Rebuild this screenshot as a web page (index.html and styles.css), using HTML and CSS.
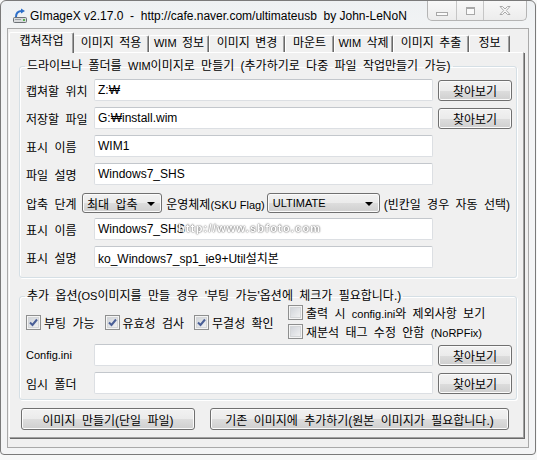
FILE: index.html
```html
<!DOCTYPE html>
<html lang="ko">
<head>
  <meta charset="UTF-8">
  <title>GImageX</title>
  <link rel="stylesheet" href="styles.css">
</head>
<body>

  <div class="window">
    <div class="titlebar">
      <svg class="app-icon" width="16" height="16" viewBox="0 0 16 16">
        <rect x="1.5" y="9.5" width="13" height="5" rx="1" fill="#d8dadc" stroke="#6d7277"/>
        <rect x="3" y="11" width="6" height="1" fill="#9aa0a6"/>
        <rect x="11" y="11" width="2" height="2" fill="#55b04c"/>
        <path d="M4 9 C4 5 6 3 10 3" fill="none" stroke="#2d6fc9" stroke-width="2"/>
        <path d="M9 0.5 L13 3 L9 5.5 Z" fill="#2d6fc9"/>
      </svg>
      <span class="title">GImageX v2.17.0  -  http://cafe.naver.com/ultimateusb  by John-LeNoN</span>
      <div class="caption">
        <span class="cap cap-min"><i></i></span>
        <span class="cap cap-max"><i></i></span>
        <span class="cap cap-close">
          <svg width="12" height="11" viewBox="0 0 12 11">
            <path d="M1 1.5 H3.5 L6 4 L8.5 1.5 H11 L7.3 5.5 L11 9.5 H8.5 L6 7 L3.5 9.5 H1 L4.7 5.5 Z" fill="#fafafa" stroke="#a8a8a8"/>
          </svg>
        </span>
      </div>
    </div>

    <div class="client">
      <div class="tabstrip">
        <span class="tab active">캡쳐작업</span>
        <span class="tab">이미지 적용</span>
        <span class="tab"><span class="en">WIM</span> 정보</span>
        <span class="tab">이미지 변경</span>
        <span class="tab">마운트</span>
        <span class="tab"><span class="en">WIM</span> 삭제</span>
        <span class="tab">이미지 추출</span>
        <span class="tab">정보</span>
      </div>

      <div class="panel">
        <fieldset class="group group-capture">
          <legend>드라이브나 폴더를 <span class="en">WIM</span>이미지로 만들기 (추가하기로 다중 파일 작업만들기 가능)</legend>

          <div class="row">
            <label>캡쳐할 위치</label>
            <div class="field">Z:₩</div>
            <button class="btn btn-browse">찾아보기</button>
          </div>
          <div class="row">
            <label>저장할 파일</label>
            <div class="field">G:₩install.wim</div>
            <button class="btn btn-browse">찾아보기</button>
          </div>
          <div class="row">
            <label>표시 이름</label>
            <div class="field">WIM1</div>
          </div>
          <div class="row">
            <label>파일 설명</label>
            <div class="field">Windows7_SHS</div>
          </div>
          <div class="row row-combo">
            <label class="label-short">압축 단계</label>
            <div class="combo combo-level"><span>최대 압축</span><b class="arrow"></b></div>
            <span class="combo-caption">운영체제<span class="en">(SKU Flag)</span></span>
            <div class="combo combo-sku"><span class="en">ULTIMATE</span><b class="arrow"></b></div>
            <span class="combo-caption">(빈칸일 경우 자동 선택)</span>
          </div>
          <div class="row">
            <label>표시 이름</label>
            <div class="field">Windows7_SHS</div>
            <span class="watermark">http://www.sbfoto.com</span>
          </div>
          <div class="row">
            <label>표시 설명</label>
            <div class="field">ko_Windows7_sp1_ie9+Util설치본</div>
          </div>
        </fieldset>

        <fieldset class="group group-options">
          <legend>추가 옵션(<span class="en">OS</span>이미지를 만들 경우 '부팅 가능'옵션에 체크가 필요합니다.)</legend>

          <div class="options">
            <div class="options-main">
              <span class="check checked"><span>부팅 가능</span></span>
              <span class="check checked"><span>유효성 검사</span></span>
              <span class="check checked"><span>무결성 확인</span></span>
            </div>
            <div class="options-side">
              <span class="check"><span>출력 시 <span class="en">config.ini</span>와 제외사항 보기</span></span>
              <span class="check"><span>재분석 태그 수정 안함 <span class="en">(NoRPFix)</span></span></span>
            </div>
          </div>

          <div class="row">
            <label class="en">Config.ini</label>
            <div class="field"></div>
            <button class="btn btn-browse">찾아보기</button>
          </div>
          <div class="row">
            <label>임시 폴더</label>
            <div class="field"></div>
            <button class="btn btn-browse">찾아보기</button>
          </div>
        </fieldset>

        <div class="actions">
          <button class="btn btn-single">이미지 만들기(단일 파일)</button>
          <button class="btn btn-append">기존 이미지에 추가하기(원본 이미지가 필요합니다.)</button>
        </div>
      </div>
    </div>
  </div>

</body>
</html>
```

FILE: styles.css
```css
* {
  box-sizing: border-box;
}

body {
  margin: 0;
  background: #f7f8f8;
  font-family: "Liberation Sans", "Noto Sans CJK KR", sans-serif;
  font-size: 12px;
  color: #000;
}

.en {
  font-size: 11px;
  word-spacing: 0;
}

/* window frame */
.window {
  width: 536px;
  height: 455px;
  border: 1px solid #7a7a7a;
  border-radius: 6px 6px 4px 4px;
  background: linear-gradient(#eef1f3, #f3f4f5 40px);
  padding: 0 6px 6px;
}

.titlebar {
  display: flex;
  align-items: center;
  height: 27px;
}

.app-icon {
  margin: 2px 2px 0 5px;
  flex: none;
}

.title {
  white-space: pre;
  margin-top: 2px;
}

.caption {
  display: flex;
  align-self: flex-start;
  margin-left: auto;
  margin-right: 2px;
  height: 20px;
  border: 1px solid #b4b4b4;
  border-top: none;
  border-radius: 0 0 5px 5px;
  background: linear-gradient(#f8f8f8, #ececec);
}

.cap {
  display: flex;
  align-items: center;
  justify-content: center;
  height: 100%;
  border-left: 1px solid #c6c6c6;
}

.cap:first-child {
  border-left: none;
}

.cap-min {
  width: 28px;
}

.cap-min i {
  width: 12px;
  height: 4px;
  margin-top: 6px;
  border: 1px solid #a8a8a8;
  background: #fafafa;
}

.cap-max {
  width: 27px;
}

.cap-max i {
  width: 9px;
  height: 8px;
  border: 1px solid #a8a8a8;
  border-top-width: 2px;
  background: #fafafa;
}

.cap-close {
  width: 43px;
}

/* client area */
.client {
  height: 420px;
  border: 1px solid #a9a9a9;
  background: #f0f0f0;
  padding: 3px 3px 0 1px;
  word-spacing: 3px;
}

.tabstrip {
  display: flex;
  align-items: flex-end;
  height: 20px;
}

.tab {
  display: block;
  flex: none;
  height: 17px;
  line-height: 15px;
  text-align: center;
  border-top: 1px solid #fff;
  border-left: 1px solid #fff;
  border-right: 1px solid #696969;
  box-shadow: inset -1px 0 0 #a0a0a0;
  border-radius: 2px 2px 0 0;
  white-space: nowrap;
  word-spacing: 2px;
}

.tab.active {
  position: relative;
  z-index: 1;
  height: 21px;
  line-height: 17px;
  margin-bottom: -1px;
  background: #f0f0f0;
}

.tab.active + .tab {
  border-left: none;
}

.tab:nth-child(1) { width: 65px; }
.tab:nth-child(2) { width: 75px; }
.tab:nth-child(3) { width: 60px; }
.tab:nth-child(4) { width: 76px; }
.tab:nth-child(5) { width: 49px; }
.tab:nth-child(6) { width: 59px; }
.tab:nth-child(7) { width: 76px; }
.tab:nth-child(8) { width: 41px; }

.panel {
  width: 515px;
  height: 386px;
  border-top: 1px solid #fff;
  border-left: 1px solid #fff;
  border-right: 1px solid #a0a0a0;
  border-bottom: 1px solid #a0a0a0;
  box-shadow: 1px 1px 0 #696969;
  padding: 5px 6px 0 9px;
}

/* group boxes */
.group {
  margin: 0;
  min-width: 0;
  border: 1px solid #d5dfe5;
  border-radius: 3px;
  box-shadow: inset 1px 1px 0 #fff, 1px 1px 0 #fff;
  padding: 5px 4px 9px 6px;
}

.group legend {
  margin-left: -1px;
  padding: 0 2px;
  line-height: 16px;
  white-space: nowrap;
}

.group-capture {
  display: flex;
  flex-direction: column;
  gap: 6px;
}

.group-options {
  margin-top: 11px;
  padding-top: 0;
  padding-bottom: 5px;
}

.group-options legend {
  line-height: 14px;
}

.row {
  position: relative;
  display: flex;
  align-items: center;
  height: 22px;
}

.row label {
  width: 68px;
  flex: none;
  white-space: nowrap;
}

.field {
  display: flex;
  align-items: center;
  width: 339px;
  height: 22px;
  padding-left: 3px;
  background: #fff;
  border: 1px solid #dcdfe3;
  border-top-color: #c3c7cc;
  border-radius: 2px;
  white-space: nowrap;
  overflow: hidden;
}

/* buttons */
.btn {
  height: 21px;
  padding: 0;
  font: inherit;
  word-spacing: inherit;
  color: #000;
  border: 1px solid #707070;
  border-radius: 3px;
  background: linear-gradient(#f2f2f2 0%, #ebebeb 50%, #dddddd 51%, #cfcfcf 100%);
  box-shadow: inset 0 0 0 1px #fbfbfb;
}

.btn-browse {
  width: 74px;
  margin-left: 5px;
}

/* combo row */
.row-combo {
  height: 20px;
  margin: 2px 0 -1px;
}

.row .label-short {
  width: 56px;
}

.combo {
  position: relative;
  display: flex;
  align-items: center;
  height: 20px;
  padding-left: 4px;
  border: 1px solid #707070;
  border-radius: 3px;
  background: linear-gradient(#f2f2f2 0%, #ebebeb 50%, #dddddd 51%, #cfcfcf 100%);
  box-shadow: inset 0 0 0 1px #fbfbfb;
  white-space: nowrap;
}

.combo .arrow {
  position: absolute;
  right: 6px;
  top: 8px;
  border-left: 4px solid transparent;
  border-right: 4px solid transparent;
  border-top: 4px solid #000;
}

.combo-level {
  width: 81px;
}

.combo-sku {
  width: 114px;
  padding-left: 5px;
}

.combo-caption {
  margin: 0 2px 0 4px;
  white-space: nowrap;
}

.watermark {
  position: absolute;
  left: 152px;
  top: 4px;
  color: #fff;
  font-weight: bold;
  font-size: 11px;
  letter-spacing: 1.2px;
  text-shadow: 0 0 2px #444, 0 0 1px #666;
  filter: blur(0.6px);
  opacity: 0.9;
}

/* options */
.options {
  display: flex;
  height: 38px;
  margin-bottom: 3px;
}

.options-main {
  display: flex;
  align-items: center;
  gap: 10px;
  width: 262px;
}

.options-side {
  display: flex;
  flex-direction: column;
}

.options-side .check {
  height: 19px;
}

.check {
  display: flex;
  align-items: center;
  white-space: nowrap;
}

.check::before {
  content: "";
  flex: none;
  width: 13px;
  height: 13px;
  margin-right: 3px;
  border: 1px solid #8e8f8f;
  background: linear-gradient(135deg, #cbcfd5, #f6f6f6);
  box-shadow: inset 0 0 0 1px #f4f4f4, inset 0 0 0 2px #d4d6d8;
}

.check.checked::before {
  background:
    url("data:image/svg+xml;utf8,<svg xmlns='http://www.w3.org/2000/svg' width='11' height='11' viewBox='0 0 11 11'><path d='M2 5.5 L4.5 8 L9 2.5' fill='none' stroke='%234a5f97' stroke-width='2'/></svg>") center no-repeat,
    linear-gradient(135deg, #cbcfd5, #f6f6f6);
}

.group-options .row + .row {
  margin-top: 6px;
}

.actions {
  display: flex;
  justify-content: space-between;
  padding: 8px 8px 0 2px;
}

.btn-single {
  width: 174px;
  height: 22px;
}

.btn-append {
  width: 299px;
  height: 22px;
}
```
